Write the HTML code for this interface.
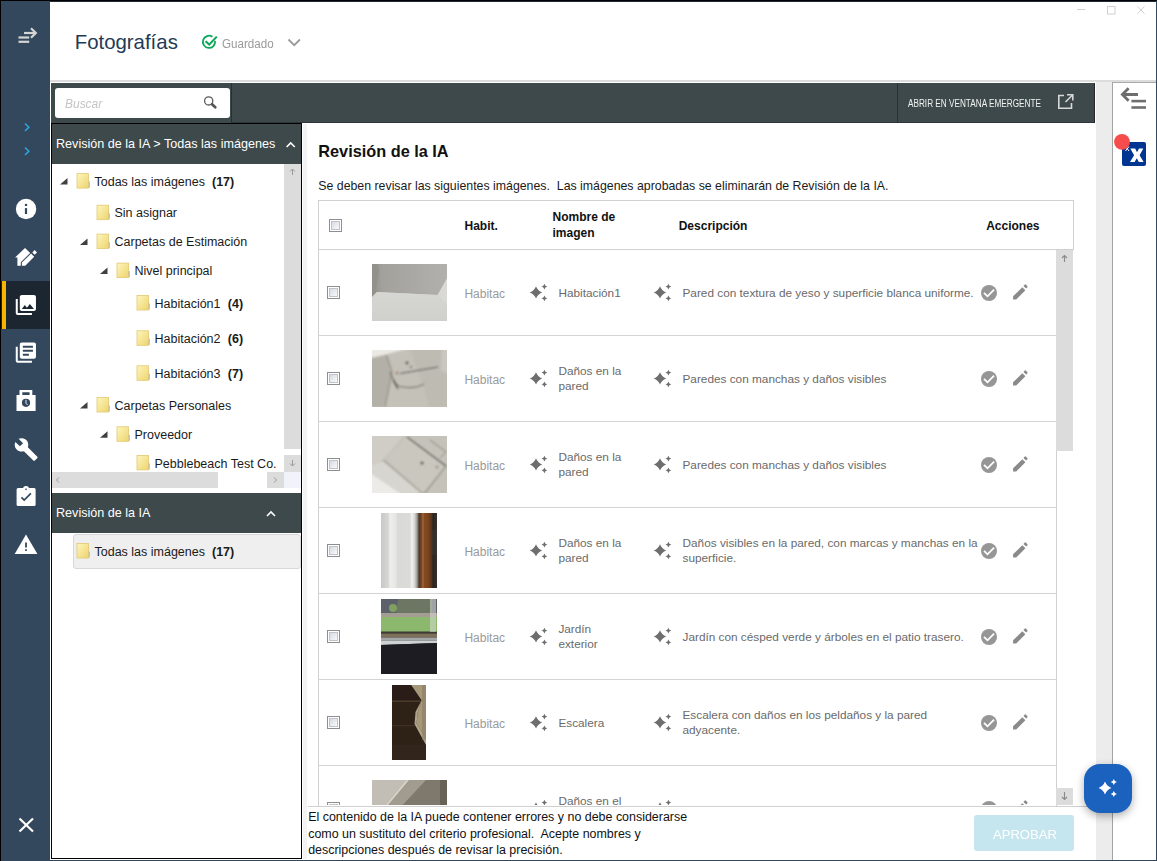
<!DOCTYPE html>
<html><head><meta charset="utf-8">
<style>
*{box-sizing:border-box;margin:0;padding:0}
html,body{width:1157px;height:861px;overflow:hidden;background:#fff;font-family:"Liberation Sans",sans-serif}
.a{position:absolute}
.t{position:absolute;white-space:nowrap;line-height:1}
.clip{position:absolute;left:0;top:0;overflow:hidden}
svg.o{position:absolute;left:0;top:0;overflow:visible}
</style></head><body>
<div class="a" style="left:0px;top:0px;width:1157px;height:861px;background:#34485d;"></div>
<div class="a" style="left:0px;top:0px;width:1157px;height:1px;background:#000;"></div>
<div class="a" style="left:0px;top:0px;width:1px;height:861px;background:#000;"></div>
<div class="a" style="left:50px;top:2px;width:1106px;height:78px;background:#fff;"></div>
<div class="a" style="left:50px;top:1px;width:1106px;height:1px;background:#1e2b39;"></div>
<div class="a" style="left:50px;top:80px;width:1106px;height:2px;background:#dcdcdc;"></div>
<div class="a" style="left:50px;top:82px;width:1046px;height:778px;background:#fff;"></div>
<div class="a" style="left:51px;top:83px;width:1044px;height:40px;background:#3e494b;"></div>
<div class="a" style="left:231px;top:83px;width:1px;height:40px;background:#283032;"></div>
<div class="a" style="left:232px;top:122px;width:863px;height:1px;background:#2d3538;"></div>
<div class="a" style="left:1094px;top:83px;width:1px;height:40px;background:#25292b;"></div>
<div class="a" style="left:897px;top:83px;width:1px;height:40px;background:#283032;"></div>
<div class="a" style="left:55px;top:88px;width:175px;height:30px;background:#fff;border-radius:3px;"></div>
<div class="a" style="left:1096px;top:82px;width:16px;height:778px;background:#ececec;"></div>
<div class="a" style="left:1112px;top:82px;width:1px;height:778px;background:#a4a4a4;"></div>
<div class="a" style="left:1113px;top:83px;width:43px;height:777px;background:#fff;"></div>
<div class="a" style="left:1112px;top:82px;width:44px;height:1px;background:#aaaaaa;"></div>
<div class="a" style="left:51px;top:123px;width:251px;height:736px;border:1px solid #000;background:#fff"></div>
<div class="a" style="left:52px;top:124px;width:249px;height:40px;background:#3e494b;"></div>
<div class="a" style="left:52px;top:493px;width:249px;height:40px;background:#3e494b;"></div>
<div class="a" style="left:303px;top:124px;width:4px;height:735px;background:#f3f3f3;"></div>
<div class="a" style="left:284px;top:164px;width:17px;height:285px;background:#dcdcdc;"></div>
<div class="a" style="left:284px;top:455px;width:17px;height:17px;background:#dcdcdc;"></div>
<div class="a" style="left:52px;top:472px;width:166px;height:16px;background:#dcdcdc;"></div>
<div class="a" style="left:267px;top:472px;width:17px;height:16px;background:#dcdcdc;"></div>
<div class="a" style="left:284px;top:472px;width:17px;height:16px;background:#f0f4fa;"></div>
<div class="a" style="left:73px;top:534px;width:228px;height:35px;background:#efefef;border:1px solid #d8d8d8;border-radius:3px"></div>
<div class="t" style="left:74.7px;top:31.80px;font-size:20.4px;color:#233a55;font-weight:normal;font-style:normal;">Fotografías</div>
<div class="t" style="left:222px;top:37.75px;font-size:12.5px;color:#9a9a9a;font-weight:normal;font-style:normal;transform:scaleX(0.93);transform-origin:0 0;">Guardado</div>
<div class="t" style="left:65px;top:97.00px;font-size:13px;color:#c4c4c4;font-weight:normal;font-style:italic;transform:scaleX(0.92);transform-origin:0 0;">Buscar</div>
<div class="t" style="left:908px;top:98.70px;font-size:10px;color:#f2f2f2;font-weight:normal;font-style:normal;transform:scaleX(0.82);transform-origin:0 0;">ABRIR EN VENTANA EMERGENTE</div>
<div class="t" style="left:56px;top:138.20px;font-size:12.6px;color:#fff;font-weight:normal;font-style:normal;">Revisión de la IA &gt; Todas las imágenes</div>
<div class="t" style="left:56px;top:507.20px;font-size:12.6px;color:#fff;font-weight:normal;font-style:normal;">Revisión de la IA</div>
<div class="clip" style="width:284px;height:472px">
<div class="t" style="left:94.5px;top:175.85px;font-size:12.5px;color:#1a1a1a;font-weight:normal;font-style:normal;">Todas las imágenes</div>
<div class="t" style="left:212.0px;top:175.85px;font-size:12.5px;color:#1a1a1a;font-weight:bold;font-style:normal;">(17)</div>
<div class="t" style="left:114.5px;top:207.45px;font-size:12.5px;color:#1a1a1a;font-weight:normal;font-style:normal;">Sin asignar</div>
<div class="t" style="left:114.5px;top:236.35px;font-size:12.5px;color:#1a1a1a;font-weight:normal;font-style:normal;">Carpetas de Estimación</div>
<div class="t" style="left:134.5px;top:265.35px;font-size:12.5px;color:#1a1a1a;font-weight:normal;font-style:normal;">Nivel principal</div>
<div class="t" style="left:154.5px;top:297.75px;font-size:12.5px;color:#1a1a1a;font-weight:normal;font-style:normal;">Habitación1</div>
<div class="t" style="left:227.8px;top:297.75px;font-size:12.5px;color:#1a1a1a;font-weight:bold;font-style:normal;">(4)</div>
<div class="t" style="left:154.5px;top:333.05px;font-size:12.5px;color:#1a1a1a;font-weight:normal;font-style:normal;">Habitación2</div>
<div class="t" style="left:227.8px;top:333.05px;font-size:12.5px;color:#1a1a1a;font-weight:bold;font-style:normal;">(6)</div>
<div class="t" style="left:154.5px;top:368.05px;font-size:12.5px;color:#1a1a1a;font-weight:normal;font-style:normal;">Habitación3</div>
<div class="t" style="left:227.8px;top:368.05px;font-size:12.5px;color:#1a1a1a;font-weight:bold;font-style:normal;">(7)</div>
<div class="t" style="left:114.5px;top:399.75px;font-size:12.5px;color:#1a1a1a;font-weight:normal;font-style:normal;">Carpetas Personales</div>
<div class="t" style="left:134.5px;top:429.05px;font-size:12.5px;color:#1a1a1a;font-weight:normal;font-style:normal;">Proveedor</div>
<div class="t" style="left:154.5px;top:457.65px;font-size:12.5px;color:#1a1a1a;font-weight:normal;font-style:normal;">Pebblebeach Test Co.</div>
</div>
<div class="t" style="left:94.5px;top:545.75px;font-size:12.5px;color:#1a1a1a;font-weight:normal;font-style:normal;">Todas las imágenes</div>
<div class="t" style="left:212.0px;top:545.75px;font-size:12.5px;color:#1a1a1a;font-weight:bold;font-style:normal;">(17)</div>
<div class="t" style="left:318.3px;top:142.85px;font-size:16.3px;color:#111;font-weight:bold;font-style:normal;">Revisión de la IA</div>
<div class="t" style="left:318.3px;top:180.43px;font-size:12.34px;color:#1a1a1a;font-weight:normal;font-style:normal;">Se deben revisar las siguientes imágenes.&nbsp; Las imágenes aprobadas se eliminarán de Revisión de la IA.</div>
<div class="a" style="left:318px;top:200px;width:756px;height:50px;border:1px solid #d0d0d0"></div>
<div class="a" style="left:318px;top:249px;width:1px;height:557px;background:#d0d0d0;"></div>
<div class="a" style="left:1056px;top:249px;width:1px;height:557px;background:#d0d0d0;"></div>
<div class="a" style="left:1056px;top:250px;width:17px;height:201px;background:#dcdcdc;"></div>
<div class="a" style="left:1056px;top:788px;width:17px;height:17px;background:#dcdcdc;"></div>
<div class="t" style="left:464.5px;top:220.00px;font-size:12px;color:#111;font-weight:bold;font-style:normal;">Habit.</div>
<div class="t" style="left:552.5px;top:211.20px;font-size:12px;color:#111;font-weight:bold;font-style:normal;">Nombre de</div>
<div class="t" style="left:552.5px;top:227.20px;font-size:12px;color:#111;font-weight:bold;font-style:normal;">imagen</div>
<div class="t" style="left:678.7px;top:220.20px;font-size:12px;color:#111;font-weight:bold;font-style:normal;">Descripción</div>
<div class="t" style="left:986.2px;top:220.20px;font-size:12px;color:#111;font-weight:bold;font-style:normal;">Acciones</div>
<div class="a" style="left:329px;top:219px;width:13px;height:13px;border:1px solid #8e8e8e;background:#fff"><div class="a" style="left:1px;top:1px;width:9px;height:9px;border:1px solid #bfc3ca;background:linear-gradient(135deg,#d6dae2,#fafafb)"></div></div>
<div class="clip" style="width:1157px;height:805px">
<div class="a" style="left:327px;top:286px;width:13px;height:13px;border:1px solid #8e8e8e;background:#fff"><div class="a" style="left:1px;top:1px;width:9px;height:9px;border:1px solid #bfc3ca;background:linear-gradient(135deg,#d6dae2,#fafafb)"></div></div>
<div class="t" style="left:464.4px;top:287.50px;font-size:12px;color:#9a9a9a;font-weight:normal;font-style:normal;">Habitac</div>
<div class="t" style="left:558.4px;top:287.60px;font-size:11.8px;color:#6a6a6a;font-weight:normal;font-style:normal;">Habitación1</div>
<div class="t" style="left:682.5px;top:287.60px;font-size:11.8px;color:#6a6a6a;font-weight:normal;font-style:normal;">Pared con textura de yeso y superficie blanca uniforme.</div>
<div class="a" style="left:318px;top:335px;width:738px;height:1px;background:#d4d4d4;"></div>
<div class="a" style="left:327px;top:372px;width:13px;height:13px;border:1px solid #8e8e8e;background:#fff"><div class="a" style="left:1px;top:1px;width:9px;height:9px;border:1px solid #bfc3ca;background:linear-gradient(135deg,#d6dae2,#fafafb)"></div></div>
<div class="t" style="left:464.4px;top:373.50px;font-size:12px;color:#9a9a9a;font-weight:normal;font-style:normal;">Habitac</div>
<div class="t" style="left:558.4px;top:365.60px;font-size:11.8px;color:#6a6a6a;font-weight:normal;font-style:normal;">Daños en la</div>
<div class="t" style="left:558.4px;top:381.10px;font-size:11.8px;color:#6a6a6a;font-weight:normal;font-style:normal;">pared</div>
<div class="t" style="left:682.5px;top:373.60px;font-size:11.8px;color:#6a6a6a;font-weight:normal;font-style:normal;">Paredes con manchas y daños visibles</div>
<div class="a" style="left:318px;top:421px;width:738px;height:1px;background:#d4d4d4;"></div>
<div class="a" style="left:327px;top:458px;width:13px;height:13px;border:1px solid #8e8e8e;background:#fff"><div class="a" style="left:1px;top:1px;width:9px;height:9px;border:1px solid #bfc3ca;background:linear-gradient(135deg,#d6dae2,#fafafb)"></div></div>
<div class="t" style="left:464.4px;top:459.50px;font-size:12px;color:#9a9a9a;font-weight:normal;font-style:normal;">Habitac</div>
<div class="t" style="left:558.4px;top:451.60px;font-size:11.8px;color:#6a6a6a;font-weight:normal;font-style:normal;">Daños en la</div>
<div class="t" style="left:558.4px;top:467.10px;font-size:11.8px;color:#6a6a6a;font-weight:normal;font-style:normal;">pared</div>
<div class="t" style="left:682.5px;top:459.60px;font-size:11.8px;color:#6a6a6a;font-weight:normal;font-style:normal;">Paredes con manchas y daños visibles</div>
<div class="a" style="left:318px;top:507px;width:738px;height:1px;background:#d4d4d4;"></div>
<div class="a" style="left:327px;top:544px;width:13px;height:13px;border:1px solid #8e8e8e;background:#fff"><div class="a" style="left:1px;top:1px;width:9px;height:9px;border:1px solid #bfc3ca;background:linear-gradient(135deg,#d6dae2,#fafafb)"></div></div>
<div class="t" style="left:464.4px;top:545.50px;font-size:12px;color:#9a9a9a;font-weight:normal;font-style:normal;">Habitac</div>
<div class="t" style="left:558.4px;top:537.60px;font-size:11.8px;color:#6a6a6a;font-weight:normal;font-style:normal;">Daños en la</div>
<div class="t" style="left:558.4px;top:553.10px;font-size:11.8px;color:#6a6a6a;font-weight:normal;font-style:normal;">pared</div>
<div class="t" style="left:682.5px;top:537.60px;font-size:11.8px;color:#6a6a6a;font-weight:normal;font-style:normal;">Daños visibles en la pared, con marcas y manchas en la</div>
<div class="t" style="left:682.5px;top:553.10px;font-size:11.8px;color:#6a6a6a;font-weight:normal;font-style:normal;">superficie.</div>
<div class="a" style="left:318px;top:593px;width:738px;height:1px;background:#d4d4d4;"></div>
<div class="a" style="left:327px;top:630px;width:13px;height:13px;border:1px solid #8e8e8e;background:#fff"><div class="a" style="left:1px;top:1px;width:9px;height:9px;border:1px solid #bfc3ca;background:linear-gradient(135deg,#d6dae2,#fafafb)"></div></div>
<div class="t" style="left:464.4px;top:631.50px;font-size:12px;color:#9a9a9a;font-weight:normal;font-style:normal;">Habitac</div>
<div class="t" style="left:558.4px;top:623.60px;font-size:11.8px;color:#6a6a6a;font-weight:normal;font-style:normal;">Jardín</div>
<div class="t" style="left:558.4px;top:639.10px;font-size:11.8px;color:#6a6a6a;font-weight:normal;font-style:normal;">exterior</div>
<div class="t" style="left:682.5px;top:631.60px;font-size:11.8px;color:#6a6a6a;font-weight:normal;font-style:normal;">Jardín con césped verde y árboles en el patio trasero.</div>
<div class="a" style="left:318px;top:679px;width:738px;height:1px;background:#d4d4d4;"></div>
<div class="a" style="left:327px;top:716px;width:13px;height:13px;border:1px solid #8e8e8e;background:#fff"><div class="a" style="left:1px;top:1px;width:9px;height:9px;border:1px solid #bfc3ca;background:linear-gradient(135deg,#d6dae2,#fafafb)"></div></div>
<div class="t" style="left:464.4px;top:717.50px;font-size:12px;color:#9a9a9a;font-weight:normal;font-style:normal;">Habitac</div>
<div class="t" style="left:558.4px;top:717.60px;font-size:11.8px;color:#6a6a6a;font-weight:normal;font-style:normal;">Escalera</div>
<div class="t" style="left:682.5px;top:709.60px;font-size:11.8px;color:#6a6a6a;font-weight:normal;font-style:normal;">Escalera con daños en los peldaños y la pared</div>
<div class="t" style="left:682.5px;top:725.10px;font-size:11.8px;color:#6a6a6a;font-weight:normal;font-style:normal;">adyacente.</div>
<div class="a" style="left:318px;top:765px;width:738px;height:1px;background:#d4d4d4;"></div>
<div class="a" style="left:327px;top:802px;width:13px;height:13px;border:1px solid #8e8e8e;background:#fff"><div class="a" style="left:1px;top:1px;width:9px;height:9px;border:1px solid #bfc3ca;background:linear-gradient(135deg,#d6dae2,#fafafb)"></div></div>
<div class="t" style="left:464.4px;top:803.50px;font-size:12px;color:#9a9a9a;font-weight:normal;font-style:normal;">Habitac</div>
<div class="t" style="left:558.4px;top:795.60px;font-size:11.8px;color:#6a6a6a;font-weight:normal;font-style:normal;">Daños en el</div>
<div class="t" style="left:558.4px;top:811.10px;font-size:11.8px;color:#6a6a6a;font-weight:normal;font-style:normal;">techo</div>
<div class="t" style="left:682.5px;top:803.60px;font-size:11.8px;color:#6a6a6a;font-weight:normal;font-style:normal;">Plano en la figura de manchas visibles en el techo.</div>
</div>
<div class="a" style="left:308px;top:806px;width:787px;height:1px;background:#d0d0d0;"></div>
<div class="t" style="left:308.2px;top:811.27px;font-size:12.45px;color:#111;font-weight:normal;font-style:normal;">El contenido de la IA puede contener errores y no debe considerarse</div>
<div class="t" style="left:308.2px;top:827.67px;font-size:12.45px;color:#111;font-weight:normal;font-style:normal;">como un sustituto del criterio profesional.&nbsp; Acepte nombres y</div>
<div class="t" style="left:308.2px;top:844.07px;font-size:12.45px;color:#111;font-weight:normal;font-style:normal;">descripciones después de revisar la precisión.</div>
<div class="a" style="left:974px;top:815px;width:100px;height:36px;background:#c5e5ef;border-radius:3px"></div>
<div class="t" style="left:993px;top:827.90px;font-size:13.2px;color:#fff;font-weight:normal;font-style:normal;transform:scaleX(0.99);transform-origin:0 0;">APROBAR</div>
<div class="a" style="left:1083.5px;top:763.5px;width:48px;height:49px;background:#1b61be;border-radius:16px;box-shadow:0 3px 9px rgba(0,0,0,0.32)"></div>
<svg class="o" width="1157" height="861" viewBox="0 0 1157 861"><defs>
<linearGradient id="fold" x1="0" y1="0" x2="1" y2="1"><stop offset="0" stop-color="#fdf6bd"/><stop offset="1" stop-color="#eed46c"/></linearGradient>
<symbol id="spark" viewBox="0 0 18 15" width="18" height="15">
<path d="M6 1.2 Q7 6.2 12 7.5 Q7 8.8 6 13.8 Q5 8.8 0 7.5 Q5 6.2 6 1.2Z" fill="#6e6e6e"/>
<path d="M14.4 0 Q14.8 2.3 17.2 2.7 Q14.8 3.1 14.4 5.4 Q14 3.1 11.6 2.7 Q14 2.3 14.4 0Z" fill="#6e6e6e"/>
<path d="M14.4 9.6 Q14.8 11.9 17.2 12.3 Q14.8 12.7 14.4 15 Q14 12.7 11.6 12.3 Q14 11.9 14.4 9.6Z" fill="#6e6e6e"/>
</symbol>
</defs><rect x="1" y="281" width="49" height="48" fill="#1b2631"/><rect x="2" y="281" width="4" height="48" fill="#f5b400"/><g stroke="#d5d5d5" stroke-width="2.2" fill="none"><path d="M24 33 H36"/><path d="M31 28.3 L35.8 33 L31 37.7"/><path d="M18.5 37.5 H29.2"/><path d="M18.5 41.8 H29.2"/></g><g stroke="#2aa5dc" stroke-width="1.6" fill="none"><path d="M25 123.5 L28.8 127.2 L25 131"/><path d="M25 147.5 L28.8 151.2 L25 155"/></g><circle cx="26.05" cy="209" r="10.2" fill="#fff"/><rect x="24.9" y="208.1" width="2.2" height="5.9" fill="#34485d"/><rect x="24.9" y="203.9" width="2.2" height="2.1" fill="#34485d"/><path d="M25 248 L15 257.6 L17.4 257.6 L17.4 265.8 L20.8 265.8 L20.8 262.2 L30.2 252.9 Z" fill="#fff"/><path d="M21.9 265.8 L21.9 262.6 L31.1 253.6 L34.2 256.8 L25.2 265.8 Z" fill="#fff"/><path d="M32.3 252.4 L34.6 250.1 L37 252.5 L34.7 254.8 Z" fill="#fff"/><g transform="translate(13.74,292.9) scale(1.01)"><path d="M22 16V4c0-1.1-.9-2-2-2H8c-1.1 0-2 .9-2 2v12c0 1.1.9 2 2 2h12c1.1 0 2-.9 2-2zm-11-4l2.03 2.71L16 11l4 5H8l3-4zM2 6v14c0 1.1.9 2 2 2h14v-2H4V6H2z" fill="#fff"/></g><g transform="translate(13.74,340.6) scale(1.01)"><path d="M4 6H2v14c0 1.1.9 2 2 2h14v-2H4V6zm16-4H8c-1.1 0-2 .9-2 2v12c0 1.1.9 2 2 2h12c1.1 0 2-.9 2-2V4c0-1.1-.9-2-2-2zm-1 9H9V9h10v2zm-4 4H9v-2h6v2zm4-8H9V5h10v2z" fill="#fff"/></g><path d="M16.5 395 H35.6 V411 H16.5 Z" fill="#fff"/><path d="M19.5 395 V390 H32.3 V395 H29.6 V392.3 H22.3 V395 Z" fill="#fff"/><circle cx="26" cy="402.8" r="4.1" fill="#34485d"/><path d="M26 399.8 V403.3 L27.6 405" stroke="#fff" stroke-width="0.9" fill="none"/><g transform="translate(13.7,437) scale(1.04)"><path d="M22.7 19l-9.1-9.1c.9-2.3.4-5-1.5-6.9-2-2-5-2.4-7.4-1.3L9 6 6 9 1.6 4.7C.4 7.1.9 10.1 2.9 12.1c1.9 1.9 4.6 2.4 6.9 1.5l9.1 9.1c.4.4 1 .4 1.4 0l2.3-2.3c.5-.4.5-1.1.1-1.4z" fill="#fff"/></g><rect x="16.6" y="488" width="19" height="18" rx="1.5" fill="#fff"/><path d="M23 489 Q23 485.9 26 485.9 Q29 485.9 29 489 Z" fill="#fff"/><rect x="25.4" y="488.5" width="1.3" height="1.6" fill="#34485d"/><path d="M21.4 497.3 L24.2 500.1 L30.9 493.4" stroke="#34485d" stroke-width="1.7" fill="none"/><path d="M26 534.6 L37.4 553.9 H14.7 Z" fill="#fff"/><rect x="25.1" y="542.5" width="1.8" height="5" fill="#34485d"/><rect x="25.1" y="549.2" width="1.8" height="1.7" fill="#34485d"/><g stroke="#fff" stroke-width="2.2"><path d="M19.5 818.5 L33 831.5"/><path d="M33 818.5 L19.5 831.5"/></g><path d="M215.0 40.9 A6.1 6.1 0 1 1 212.4 36.8" stroke="#0aa85a" stroke-width="1.8" fill="none"/><path d="M205.6 41.2 L209.2 44.6 L216.8 36.6" stroke="#0aa85a" stroke-width="2.1" fill="none"/><path d="M288.5 39.5 L294.2 45.2 L299.9 39.5" stroke="#9a9a9a" stroke-width="1.8" fill="none"/><g stroke="#d0d0d0" stroke-width="1" fill="none"><path d="M1077 9.5 H1085"/><rect x="1107.5" y="6.5" width="7.5" height="7.5"/><path d="M1137.5 6.5 L1144.5 13.5 M1144.5 6.5 L1137.5 13.5"/></g><circle cx="208.7" cy="100.9" r="4.1" stroke="#5a5a5a" stroke-width="1.3" fill="none"/><path d="M212 104.2 L215.3 107.3" stroke="#555" stroke-width="2.7" stroke-linecap="round"/><g stroke="#d8d8d8" stroke-width="1.6" fill="none"><path d="M1064 95.5 H1058.8 V108.3 H1071.5 V103"/><path d="M1065.5 102 L1072.5 95"/><path d="M1067 94.8 H1072.8 V100.6"/></g><g stroke="#fff" stroke-width="1.6" fill="none"><path d="M286.6 147 L290.7 142.9 L294.8 147"/><path d="M267 516 L271 512 L275 516"/></g><g stroke="#9a9a9a" stroke-width="1" fill="none"><path d="M292.5 175 V169 M290 171.5 L292.5 169 L295 171.5"/><path d="M292.5 460 V466 M290 463.5 L292.5 466 L295 463.5"/><path d="M59 477.5 L56.5 480 L59 482.5"/><path d="M274 477.5 L276.5 480 L274 482.5"/></g><g stroke="#8a8a8a" stroke-width="1.1" fill="none"><path d="M1064.5 262 V255.5 M1062 258 L1064.5 255.5 L1067 258"/><path d="M1064.5 792 V799.5 M1062 797 L1064.5 799.5 L1067 797"/></g><g transform="translate(77,173.6)"><rect x="0" y="0" width="11.5" height="14.5" fill="url(#fold)" stroke="#e3c873" stroke-width="0.8"/><rect x="11" y="8" width="2" height="6" fill="#d9c68a"/></g><path d="M67.5 178.1 L67.5 184.6 L60 184.6 Z" fill="#404040"/><g transform="translate(97,205.2)"><rect x="0" y="0" width="11.5" height="14.5" fill="url(#fold)" stroke="#e3c873" stroke-width="0.8"/><rect x="11" y="8" width="2" height="6" fill="#d9c68a"/></g><g transform="translate(97,234.1)"><rect x="0" y="0" width="11.5" height="14.5" fill="url(#fold)" stroke="#e3c873" stroke-width="0.8"/><rect x="11" y="8" width="2" height="6" fill="#d9c68a"/></g><path d="M87.5 238.6 L87.5 245.1 L80 245.1 Z" fill="#404040"/><g transform="translate(117,263.1)"><rect x="0" y="0" width="11.5" height="14.5" fill="url(#fold)" stroke="#e3c873" stroke-width="0.8"/><rect x="11" y="8" width="2" height="6" fill="#d9c68a"/></g><path d="M107.5 267.6 L107.5 274.1 L100 274.1 Z" fill="#404040"/><g transform="translate(137,295.5)"><rect x="0" y="0" width="11.5" height="14.5" fill="url(#fold)" stroke="#e3c873" stroke-width="0.8"/><rect x="11" y="8" width="2" height="6" fill="#d9c68a"/></g><g transform="translate(137,330.8)"><rect x="0" y="0" width="11.5" height="14.5" fill="url(#fold)" stroke="#e3c873" stroke-width="0.8"/><rect x="11" y="8" width="2" height="6" fill="#d9c68a"/></g><g transform="translate(137,365.8)"><rect x="0" y="0" width="11.5" height="14.5" fill="url(#fold)" stroke="#e3c873" stroke-width="0.8"/><rect x="11" y="8" width="2" height="6" fill="#d9c68a"/></g><g transform="translate(97,397.5)"><rect x="0" y="0" width="11.5" height="14.5" fill="url(#fold)" stroke="#e3c873" stroke-width="0.8"/><rect x="11" y="8" width="2" height="6" fill="#d9c68a"/></g><path d="M87.5 402.0 L87.5 408.5 L80 408.5 Z" fill="#404040"/><g transform="translate(117,426.8)"><rect x="0" y="0" width="11.5" height="14.5" fill="url(#fold)" stroke="#e3c873" stroke-width="0.8"/><rect x="11" y="8" width="2" height="6" fill="#d9c68a"/></g><path d="M107.5 431.3 L107.5 437.8 L100 437.8 Z" fill="#404040"/><g transform="translate(137,455.4)"><rect x="0" y="0" width="11.5" height="14.5" fill="url(#fold)" stroke="#e3c873" stroke-width="0.8"/><rect x="11" y="8" width="2" height="6" fill="#d9c68a"/></g><g transform="translate(77,543.5)"><rect x="0" y="0" width="11.5" height="14.5" fill="url(#fold)" stroke="#e3c873" stroke-width="0.8"/><rect x="11" y="8" width="2" height="6" fill="#d9c68a"/></g><g stroke="#6e6e6e" fill="none"><path d="M1138 94.5 H1122.5" stroke-width="3"/><path d="M1128.6 88.3 L1122.4 94.5 L1128.6 100.7" stroke-width="2.8"/><path d="M1131.4 101.1 H1146" stroke-width="2.6"/><path d="M1131.4 107.5 H1146" stroke-width="2.6"/></g><rect x="1122" y="142" width="24" height="24" rx="2" fill="#003591"/><path d="M1130.3 148.6 H1135.2 L1137 152.3 L1139 148.6 H1143.3 L1139.6 155.2 L1143.6 162.1 H1138.8 L1136.8 158.2 L1134.6 162.1 H1130 L1134.1 155.2 Z" fill="#fff"/><path d="M1125.5 146.5 L1129 151 M1129 146.5 L1125.5 151" stroke="#fff" stroke-width="1"/><circle cx="1122" cy="141.8" r="7.9" fill="#f64c4c"/><path d="M1105 781.6 Q1106.79 786.21 1111.4 788 Q1106.79 789.79 1105 794.4 Q1103.21 789.79 1098.6 788 Q1103.21 786.21 1105 781.6Z" fill="#fff"/><path d="M1113.8 778.9 Q1114.48 781.32 1116.8999999999999 782 Q1114.48 782.68 1113.8 785.1 Q1113.12 782.68 1110.7 782 Q1113.12 781.32 1113.8 778.9Z" fill="#fff"/><path d="M1113.8 790.9 Q1114.48 793.32 1116.8999999999999 794 Q1114.48 794.68 1113.8 797.1 Q1113.12 794.68 1110.7 794 Q1113.12 793.32 1113.8 790.9Z" fill="#fff"/></svg>
<div class="clip" style="width:1157px;height:805px"><svg class="o" width="1157" height="861" viewBox="0 0 1157 861"><defs><symbol id="spark2" viewBox="0 0 18 15"></symbol></defs><defs>
<filter id="bl" x="-5%" y="-5%" width="110%" height="110%"><feGaussianBlur stdDeviation="0.7"/></filter><filter id="bl3" x="-5%" y="-5%" width="110%" height="110%"><feGaussianBlur stdDeviation="1.0"/></filter>
<filter id="bl2" x="-5%" y="-5%" width="110%" height="110%"><feGaussianBlur stdDeviation="0.45"/></filter>
<clipPath id="c1"><rect x="372" y="264" width="75" height="57"/></clipPath>
<clipPath id="c2"><rect x="372" y="350" width="75" height="57"/></clipPath>
<clipPath id="c3"><rect x="372" y="436" width="75" height="57"/></clipPath>
<clipPath id="c4"><rect x="381" y="513" width="56" height="75"/></clipPath>
<clipPath id="c5"><rect x="381" y="599" width="56" height="75"/></clipPath>
<clipPath id="c6"><rect x="392" y="685" width="34" height="75"/></clipPath>
<clipPath id="c7"><rect x="372" y="780" width="75" height="57"/></clipPath>
<linearGradient id="g1t" x1="0" y1="0" x2="1" y2="0"><stop offset="0" stop-color="#8f8d88"/><stop offset="0.15" stop-color="#a3a19c"/><stop offset="1" stop-color="#b3b1ad"/></linearGradient>
<linearGradient id="g1b" x1="0" y1="0" x2="0" y2="1"><stop offset="0" stop-color="#d6d7d3"/><stop offset="1" stop-color="#cfd0cc"/></linearGradient>
<linearGradient id="g4w" x1="0" y1="0" x2="1" y2="0"><stop offset="0" stop-color="#c8c8c6"/><stop offset="0.13" stop-color="#d6d6d4"/><stop offset="0.16" stop-color="#eeeeec"/><stop offset="0.26" stop-color="#e6e6e4"/><stop offset="0.3" stop-color="#d9d9d7"/><stop offset="0.52" stop-color="#dbdbd9"/><stop offset="0.55" stop-color="#f3f3ef"/><stop offset="0.6" stop-color="#d6d6d2"/><stop offset="0.645" stop-color="#9a9a98"/><stop offset="0.68" stop-color="#4c3626"/><stop offset="0.74" stop-color="#8a4e26"/><stop offset="0.84" stop-color="#7a4420"/><stop offset="0.9" stop-color="#5a3418"/><stop offset="0.93" stop-color="#2a2624"/><stop offset="1" stop-color="#34302e"/></linearGradient>
<linearGradient id="g6" x1="0" y1="0" x2="0" y2="1"><stop offset="0" stop-color="#33241a"/><stop offset="0.5" stop-color="#3e2d20"/><stop offset="1" stop-color="#3a2c22"/></linearGradient>
</defs>
<g clip-path="url(#c1)"><g filter="url(#bl)">
<rect x="370" y="262" width="80" height="62" fill="#c9cac6"/>
<path d="M370 262 H450 V273 L437.6 295 L377 292 L370 299 Z" fill="url(#g1t)"/>
<path d="M370 262 H377 L379 270 L376 292 L370 299 Z" fill="#92918c"/>
<path d="M377 292 L437.6 295 L450 307 V324 H370 V299 Z" fill="url(#g1b)"/>
<path d="M437.6 295 L450 273 V307 Z" fill="#d9d9d5"/>

</g></g>
<g clip-path="url(#c2)"><g filter="url(#bl3)">
<rect x="370" y="348" width="80" height="62" fill="#c3c1b8"/>
<path d="M370 348 H410 L372 358 H370 Z" fill="#ebe9e3"/>
<path d="M370 358 L386.5 355 L391 373 L384 407 H370 Z" fill="#b2b0a7"/>
<path d="M410 348 H450 V407 H430 Z" fill="#b7b5ac" opacity="0.5"/>
<path d="M442 348 H450 V375 L441 370 Z" fill="#c9c7bf"/>
<path d="M386.5 355 L392 372 L385 407" stroke="#706c62" stroke-width="0.8" fill="none"/>
<path d="M400 373.5 L438 367" stroke="#4a463e" stroke-width="1.1" fill="none"/>
<circle cx="407" cy="363" r="1.4" fill="#3c3830"/><circle cx="411" cy="367" r="0.9" fill="#4a463c"/>
<path d="M390 372 Q394 382 398 386 Q414 390 424 384" stroke="#5f5a50" stroke-width="1.2" fill="none" opacity="0.8"/>
<circle cx="397" cy="373" r="1.6" fill="#a57860" opacity="0.8"/>
<path d="M393 380 L398 389" stroke="#48443b" stroke-width="1.4"/>
</g></g>
<g clip-path="url(#c3)"><g filter="url(#bl3)">
<rect x="370" y="434" width="80" height="62" fill="#c4c2b9"/>
<path d="M370 434 H405 L383 460 L370 468 Z" fill="#cfcdc5"/>
<path d="M386 459 L407 436 L446 468 L424 493 Z" fill="#c9c7be"/>
<path d="M370 466 L384 461 L424 494 H370 Z" fill="#d6d5cf"/>
<path d="M370 473 L404 496 H370 Z" fill="#ecebe8"/>
<path d="M407 437 L446 466" stroke="#45423a" stroke-width="1.2" fill="none"/>
<path d="M383 460 L423 494" stroke="#6a665c" stroke-width="0.9" fill="none"/>
<path d="M446 466 L424 494" stroke="#5b574e" stroke-width="0.9" fill="none"/>
<circle cx="422" cy="463" r="1.5" fill="#3e3b34"/><circle cx="437" cy="467" r="1.5" fill="#a37c66" opacity="0.8"/>
<path d="M430 440 L446 452 L440 458" stroke="#625e55" stroke-width="0.7" fill="none"/>
</g></g>
<g clip-path="url(#c4)"><g filter="url(#bl2)">
<rect x="381" y="513" width="56" height="75" fill="url(#g4w)"/>
<rect x="432" y="530" width="5" height="25" fill="#3a3634" opacity="0.5"/>
<rect x="422" y="513" width="2" height="75" fill="#a86a38" opacity="0.5"/>
</g></g>
<g clip-path="url(#c5)"><g filter="url(#bl)">
<rect x="381" y="599" width="56" height="75" fill="#1b1e24"/>
<rect x="381" y="599" width="56" height="16" fill="#5c616a"/>
<path d="M398 599 H432 V614 H396Z" fill="#6f7a62" opacity="0.85"/>
<circle cx="393" cy="608" r="4" fill="#7fa060"/>
<rect x="381" y="613" width="56" height="5" fill="#a39d92"/>
<rect x="381" y="617" width="56" height="15" fill="#8bb86d"/>
<rect x="381" y="631.5" width="56" height="2" fill="#3e3b32"/>
<rect x="381" y="633.5" width="56" height="4" fill="#7c705a"/>
<rect x="381" y="637.5" width="56" height="3" fill="#a4a7a8"/>
<path d="M381 640.5 H437 V643 L381 645Z" fill="#cfd2d2"/>
<path d="M381 645 L437 643 V674 H381Z" fill="#1b1e24"/>
<rect x="430" y="599" width="6" height="33" fill="#d7dbd2" opacity="0.55"/>
</g></g>
<g clip-path="url(#c6)"><g filter="url(#bl)">
<rect x="392" y="685" width="34" height="75" fill="#2e2117"/>
<path d="M392 685 H426 V700 H392Z" fill="#2a1d14"/>
<path d="M392 700.5 H421 V702 H392Z" fill="#5a4634" opacity="0.7"/>
<path d="M392 725 H417 V726.5 H392Z" fill="#4a3a2a" opacity="0.6"/>
<path d="M392 745 H426 V760 H392Z" fill="#35281c" opacity="0.8"/>
<path d="M411.2 685 H426 V738.3 L416.6 723.5 L417.6 712.6 L421.6 700.3 Z" fill="#a8987a"/>
<path d="M421.6 700.3 L417.6 712.6 L416.6 723.5 L426 738.3 V745 L414.5 724 L415.5 712 Z" fill="#d2c4a6" opacity="0.8"/>
<rect x="422" y="685" width="4" height="55" fill="#8a7c62" opacity="0.6"/>
</g></g>
<g clip-path="url(#c7)"><g filter="url(#bl)">
<rect x="372" y="780" width="75" height="30" fill="#8a8478"/>
<path d="M427.7 778 H450 V810 H398Z" fill="#7f796d"/>
<rect x="440" y="778" width="8" height="32" fill="#5e584e" opacity="0.7"/>
<path d="M370 778 H409 L382.4 810 H370Z" fill="#c2beb6"/>
<path d="M409 778 L427.7 778 L398 810 H382.4Z" fill="#a29c90"/>
<path d="M409.5 778 L382.8 810" stroke="#dcd8cc" stroke-width="1.5"/>
</g></g>
<path d="M536 286.2 Q537.67 290.73 542.2 292.4 Q537.67 294.07 536 298.59999999999997 Q534.33 294.07 529.8 292.4 Q534.33 290.73 536 286.2Z" fill="#6e6e6e"/><path d="M544.4 283.70000000000005 Q544.98 286.02 547.3 286.6 Q544.98 287.18 544.4 289.5 Q543.82 287.18 541.5 286.6 Q543.82 286.02 544.4 283.70000000000005Z" fill="#6e6e6e"/><path d="M544.4 295.40000000000003 Q544.98 297.72 547.3 298.3 Q544.98 298.88 544.4 301.2 Q543.82 298.88 541.5 298.3 Q543.82 297.72 544.4 295.40000000000003Z" fill="#6e6e6e"/><path d="M660 286.2 Q661.67 290.73 666.2 292.4 Q661.67 294.07 660 298.59999999999997 Q658.33 294.07 653.8 292.4 Q658.33 290.73 660 286.2Z" fill="#6e6e6e"/><path d="M668.4 283.70000000000005 Q668.98 286.02 671.3 286.6 Q668.98 287.18 668.4 289.5 Q667.82 287.18 665.5 286.6 Q667.82 286.02 668.4 283.70000000000005Z" fill="#6e6e6e"/><path d="M668.4 295.40000000000003 Q668.98 297.72 671.3 298.3 Q668.98 298.88 668.4 301.2 Q667.82 298.88 665.5 298.3 Q667.82 297.72 668.4 295.40000000000003Z" fill="#6e6e6e"/><circle cx="989" cy="293.0" r="8" fill="#969696"/><path d="M984 292.8 L987.5 296.3 L994.1 289.7" stroke="#fff" stroke-width="1.8" fill="none"/><g transform="translate(1012.6,284.9) scale(0.97)"><path d="M0.5 15 L0.5 11.8 L10 2.3 L13.2 5.5 L3.7 15 Z" fill="#8a8a8a"/><path d="M11.2 1.1 L12.6 -0.3 Q13.1 -0.8 13.6 -0.3 L15.3 1.4 Q15.8 1.9 15.3 2.4 L13.9 3.8 Z" fill="#8a8a8a"/></g><path d="M536 372.2 Q537.67 376.73 542.2 378.4 Q537.67 380.07 536 384.59999999999997 Q534.33 380.07 529.8 378.4 Q534.33 376.73 536 372.2Z" fill="#6e6e6e"/><path d="M544.4 369.70000000000005 Q544.98 372.02 547.3 372.6 Q544.98 373.18 544.4 375.5 Q543.82 373.18 541.5 372.6 Q543.82 372.02 544.4 369.70000000000005Z" fill="#6e6e6e"/><path d="M544.4 381.40000000000003 Q544.98 383.72 547.3 384.3 Q544.98 384.88 544.4 387.2 Q543.82 384.88 541.5 384.3 Q543.82 383.72 544.4 381.40000000000003Z" fill="#6e6e6e"/><path d="M660 372.2 Q661.67 376.73 666.2 378.4 Q661.67 380.07 660 384.59999999999997 Q658.33 380.07 653.8 378.4 Q658.33 376.73 660 372.2Z" fill="#6e6e6e"/><path d="M668.4 369.70000000000005 Q668.98 372.02 671.3 372.6 Q668.98 373.18 668.4 375.5 Q667.82 373.18 665.5 372.6 Q667.82 372.02 668.4 369.70000000000005Z" fill="#6e6e6e"/><path d="M668.4 381.40000000000003 Q668.98 383.72 671.3 384.3 Q668.98 384.88 668.4 387.2 Q667.82 384.88 665.5 384.3 Q667.82 383.72 668.4 381.40000000000003Z" fill="#6e6e6e"/><circle cx="989" cy="379.0" r="8" fill="#969696"/><path d="M984 378.8 L987.5 382.3 L994.1 375.7" stroke="#fff" stroke-width="1.8" fill="none"/><g transform="translate(1012.6,370.9) scale(0.97)"><path d="M0.5 15 L0.5 11.8 L10 2.3 L13.2 5.5 L3.7 15 Z" fill="#8a8a8a"/><path d="M11.2 1.1 L12.6 -0.3 Q13.1 -0.8 13.6 -0.3 L15.3 1.4 Q15.8 1.9 15.3 2.4 L13.9 3.8 Z" fill="#8a8a8a"/></g><path d="M536 458.2 Q537.67 462.73 542.2 464.4 Q537.67 466.07 536 470.59999999999997 Q534.33 466.07 529.8 464.4 Q534.33 462.73 536 458.2Z" fill="#6e6e6e"/><path d="M544.4 455.70000000000005 Q544.98 458.02 547.3 458.6 Q544.98 459.18 544.4 461.5 Q543.82 459.18 541.5 458.6 Q543.82 458.02 544.4 455.70000000000005Z" fill="#6e6e6e"/><path d="M544.4 467.40000000000003 Q544.98 469.72 547.3 470.3 Q544.98 470.88 544.4 473.2 Q543.82 470.88 541.5 470.3 Q543.82 469.72 544.4 467.40000000000003Z" fill="#6e6e6e"/><path d="M660 458.2 Q661.67 462.73 666.2 464.4 Q661.67 466.07 660 470.59999999999997 Q658.33 466.07 653.8 464.4 Q658.33 462.73 660 458.2Z" fill="#6e6e6e"/><path d="M668.4 455.70000000000005 Q668.98 458.02 671.3 458.6 Q668.98 459.18 668.4 461.5 Q667.82 459.18 665.5 458.6 Q667.82 458.02 668.4 455.70000000000005Z" fill="#6e6e6e"/><path d="M668.4 467.40000000000003 Q668.98 469.72 671.3 470.3 Q668.98 470.88 668.4 473.2 Q667.82 470.88 665.5 470.3 Q667.82 469.72 668.4 467.40000000000003Z" fill="#6e6e6e"/><circle cx="989" cy="465.0" r="8" fill="#969696"/><path d="M984 464.8 L987.5 468.3 L994.1 461.7" stroke="#fff" stroke-width="1.8" fill="none"/><g transform="translate(1012.6,456.9) scale(0.97)"><path d="M0.5 15 L0.5 11.8 L10 2.3 L13.2 5.5 L3.7 15 Z" fill="#8a8a8a"/><path d="M11.2 1.1 L12.6 -0.3 Q13.1 -0.8 13.6 -0.3 L15.3 1.4 Q15.8 1.9 15.3 2.4 L13.9 3.8 Z" fill="#8a8a8a"/></g><path d="M536 544.1999999999999 Q537.67 548.73 542.2 550.4 Q537.67 552.07 536 556.6 Q534.33 552.07 529.8 550.4 Q534.33 548.73 536 544.1999999999999Z" fill="#6e6e6e"/><path d="M544.4 541.7 Q544.98 544.02 547.3 544.6 Q544.98 545.18 544.4 547.5 Q543.82 545.18 541.5 544.6 Q543.82 544.02 544.4 541.7Z" fill="#6e6e6e"/><path d="M544.4 553.4 Q544.98 555.72 547.3 556.3 Q544.98 556.88 544.4 559.1999999999999 Q543.82 556.88 541.5 556.3 Q543.82 555.72 544.4 553.4Z" fill="#6e6e6e"/><path d="M660 544.1999999999999 Q661.67 548.73 666.2 550.4 Q661.67 552.07 660 556.6 Q658.33 552.07 653.8 550.4 Q658.33 548.73 660 544.1999999999999Z" fill="#6e6e6e"/><path d="M668.4 541.7 Q668.98 544.02 671.3 544.6 Q668.98 545.18 668.4 547.5 Q667.82 545.18 665.5 544.6 Q667.82 544.02 668.4 541.7Z" fill="#6e6e6e"/><path d="M668.4 553.4 Q668.98 555.72 671.3 556.3 Q668.98 556.88 668.4 559.1999999999999 Q667.82 556.88 665.5 556.3 Q667.82 555.72 668.4 553.4Z" fill="#6e6e6e"/><circle cx="989" cy="551.0" r="8" fill="#969696"/><path d="M984 550.8 L987.5 554.3 L994.1 547.7" stroke="#fff" stroke-width="1.8" fill="none"/><g transform="translate(1012.6,542.9) scale(0.97)"><path d="M0.5 15 L0.5 11.8 L10 2.3 L13.2 5.5 L3.7 15 Z" fill="#8a8a8a"/><path d="M11.2 1.1 L12.6 -0.3 Q13.1 -0.8 13.6 -0.3 L15.3 1.4 Q15.8 1.9 15.3 2.4 L13.9 3.8 Z" fill="#8a8a8a"/></g><path d="M536 630.1999999999999 Q537.67 634.73 542.2 636.4 Q537.67 638.07 536 642.6 Q534.33 638.07 529.8 636.4 Q534.33 634.73 536 630.1999999999999Z" fill="#6e6e6e"/><path d="M544.4 627.7 Q544.98 630.02 547.3 630.6 Q544.98 631.18 544.4 633.5 Q543.82 631.18 541.5 630.6 Q543.82 630.02 544.4 627.7Z" fill="#6e6e6e"/><path d="M544.4 639.4 Q544.98 641.72 547.3 642.3 Q544.98 642.88 544.4 645.1999999999999 Q543.82 642.88 541.5 642.3 Q543.82 641.72 544.4 639.4Z" fill="#6e6e6e"/><path d="M660 630.1999999999999 Q661.67 634.73 666.2 636.4 Q661.67 638.07 660 642.6 Q658.33 638.07 653.8 636.4 Q658.33 634.73 660 630.1999999999999Z" fill="#6e6e6e"/><path d="M668.4 627.7 Q668.98 630.02 671.3 630.6 Q668.98 631.18 668.4 633.5 Q667.82 631.18 665.5 630.6 Q667.82 630.02 668.4 627.7Z" fill="#6e6e6e"/><path d="M668.4 639.4 Q668.98 641.72 671.3 642.3 Q668.98 642.88 668.4 645.1999999999999 Q667.82 642.88 665.5 642.3 Q667.82 641.72 668.4 639.4Z" fill="#6e6e6e"/><circle cx="989" cy="637.0" r="8" fill="#969696"/><path d="M984 636.8 L987.5 640.3 L994.1 633.7" stroke="#fff" stroke-width="1.8" fill="none"/><g transform="translate(1012.6,628.9) scale(0.97)"><path d="M0.5 15 L0.5 11.8 L10 2.3 L13.2 5.5 L3.7 15 Z" fill="#8a8a8a"/><path d="M11.2 1.1 L12.6 -0.3 Q13.1 -0.8 13.6 -0.3 L15.3 1.4 Q15.8 1.9 15.3 2.4 L13.9 3.8 Z" fill="#8a8a8a"/></g><path d="M536 716.1999999999999 Q537.67 720.73 542.2 722.4 Q537.67 724.07 536 728.6 Q534.33 724.07 529.8 722.4 Q534.33 720.73 536 716.1999999999999Z" fill="#6e6e6e"/><path d="M544.4 713.7 Q544.98 716.02 547.3 716.6 Q544.98 717.18 544.4 719.5 Q543.82 717.18 541.5 716.6 Q543.82 716.02 544.4 713.7Z" fill="#6e6e6e"/><path d="M544.4 725.4 Q544.98 727.72 547.3 728.3 Q544.98 728.88 544.4 731.1999999999999 Q543.82 728.88 541.5 728.3 Q543.82 727.72 544.4 725.4Z" fill="#6e6e6e"/><path d="M660 716.1999999999999 Q661.67 720.73 666.2 722.4 Q661.67 724.07 660 728.6 Q658.33 724.07 653.8 722.4 Q658.33 720.73 660 716.1999999999999Z" fill="#6e6e6e"/><path d="M668.4 713.7 Q668.98 716.02 671.3 716.6 Q668.98 717.18 668.4 719.5 Q667.82 717.18 665.5 716.6 Q667.82 716.02 668.4 713.7Z" fill="#6e6e6e"/><path d="M668.4 725.4 Q668.98 727.72 671.3 728.3 Q668.98 728.88 668.4 731.1999999999999 Q667.82 728.88 665.5 728.3 Q667.82 727.72 668.4 725.4Z" fill="#6e6e6e"/><circle cx="989" cy="723.0" r="8" fill="#969696"/><path d="M984 722.8 L987.5 726.3 L994.1 719.7" stroke="#fff" stroke-width="1.8" fill="none"/><g transform="translate(1012.6,714.9) scale(0.97)"><path d="M0.5 15 L0.5 11.8 L10 2.3 L13.2 5.5 L3.7 15 Z" fill="#8a8a8a"/><path d="M11.2 1.1 L12.6 -0.3 Q13.1 -0.8 13.6 -0.3 L15.3 1.4 Q15.8 1.9 15.3 2.4 L13.9 3.8 Z" fill="#8a8a8a"/></g><path d="M536 802.1999999999999 Q537.67 806.73 542.2 808.4 Q537.67 810.07 536 814.6 Q534.33 810.07 529.8 808.4 Q534.33 806.73 536 802.1999999999999Z" fill="#6e6e6e"/><path d="M544.4 799.7 Q544.98 802.02 547.3 802.6 Q544.98 803.18 544.4 805.5 Q543.82 803.18 541.5 802.6 Q543.82 802.02 544.4 799.7Z" fill="#6e6e6e"/><path d="M544.4 811.4 Q544.98 813.72 547.3 814.3 Q544.98 814.88 544.4 817.1999999999999 Q543.82 814.88 541.5 814.3 Q543.82 813.72 544.4 811.4Z" fill="#6e6e6e"/><path d="M660 802.1999999999999 Q661.67 806.73 666.2 808.4 Q661.67 810.07 660 814.6 Q658.33 810.07 653.8 808.4 Q658.33 806.73 660 802.1999999999999Z" fill="#6e6e6e"/><path d="M668.4 799.7 Q668.98 802.02 671.3 802.6 Q668.98 803.18 668.4 805.5 Q667.82 803.18 665.5 802.6 Q667.82 802.02 668.4 799.7Z" fill="#6e6e6e"/><path d="M668.4 811.4 Q668.98 813.72 671.3 814.3 Q668.98 814.88 668.4 817.1999999999999 Q667.82 814.88 665.5 814.3 Q667.82 813.72 668.4 811.4Z" fill="#6e6e6e"/><circle cx="989" cy="809.0" r="8" fill="#969696"/><path d="M984 808.8 L987.5 812.3 L994.1 805.7" stroke="#fff" stroke-width="1.8" fill="none"/><g transform="translate(1012.6,800.9) scale(0.97)"><path d="M0.5 15 L0.5 11.8 L10 2.3 L13.2 5.5 L3.7 15 Z" fill="#8a8a8a"/><path d="M11.2 1.1 L12.6 -0.3 Q13.1 -0.8 13.6 -0.3 L15.3 1.4 Q15.8 1.9 15.3 2.4 L13.9 3.8 Z" fill="#8a8a8a"/></g></svg></div>
</body></html>
